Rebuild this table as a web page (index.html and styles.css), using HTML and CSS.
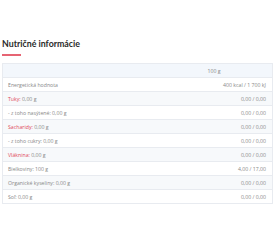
FILE: index.html
```html
<!DOCTYPE html>
<html lang="sk">
<head>
<meta charset="utf-8">
<link rel="stylesheet" href="styles.css">
</head>
<body>
<section class="nutri">
  <h2 class="title">Nutričné informácie</h2>
  <div class="underline"></div>
  <table class="tbl">
    <tr class="head"><td></td><td class="c">100 g</td></tr>
    <tr><td>Energetická hodnota</td><td class="r">400 kcal / 1 700 kJ</td></tr>
    <tr class="alt"><td><span class="red">Tuky:</span> 0,00 g</td><td class="r">0,00 / 0,00</td></tr>
    <tr><td>- z toho nasýtené: 0,00 g</td><td class="r">0,00 / 0,00</td></tr>
    <tr class="alt"><td><span class="red">Sacharidy:</span> 0,00 g</td><td class="r">0,00 / 0,00</td></tr>
    <tr><td>- z toho cukry: 0,00 g</td><td class="r">0,00 / 0,00</td></tr>
    <tr class="alt"><td><span class="red">Vláknina:</span> 0,00 g</td><td class="r">0,00 / 0,00</td></tr>
    <tr><td>Bielkoviny: 100 g</td><td class="r">4,00 / 17,00</td></tr>
    <tr class="alt"><td>Organické kyseliny: 0,00 g</td><td class="r">0,00 / 0,00</td></tr>
    <tr><td>Soľ: 0,00 g</td><td class="r">0,00 / 0,00</td></tr>
  </table>
</section>
</body>
</html>
```
FILE: styles.css
```css
html, body { margin: 0; padding: 0; background: #fff; }
body { font-family: "Open Sans", "Liberation Sans", sans-serif; }
.nutri { padding: 38px 5px 0 2px; }
.title {
  margin: 0;
  font-family: Lato, "Open Sans", sans-serif;
  font-size: 8.8px;
  line-height: 11px;
  font-weight: 700;
  color: #2a2a2a;
}
.underline {
  width: 19px;
  height: 2px;
  background: #e66473;
  margin-top: 5px;
}
.tbl {
  margin-top: 7px;
  width: 271px;
  border-collapse: collapse;
  font-size: 5.2px;
  color: #888;
  border: 1px solid #e8ebf0;
}
.tbl td {
  height: 13px;
  padding: 0 5px;
  border-top: 1px solid #e8ebf0;
  vertical-align: middle;
  white-space: nowrap;
}
.tbl .head td { background: #f3f7fc; }
.tbl .alt td { background: #f7f9fb; }
.tbl .c { text-align: center; width: 106px; }
.tbl .r { text-align: right; padding-right: 6px; }
.red { color: #e0475a; }
```
